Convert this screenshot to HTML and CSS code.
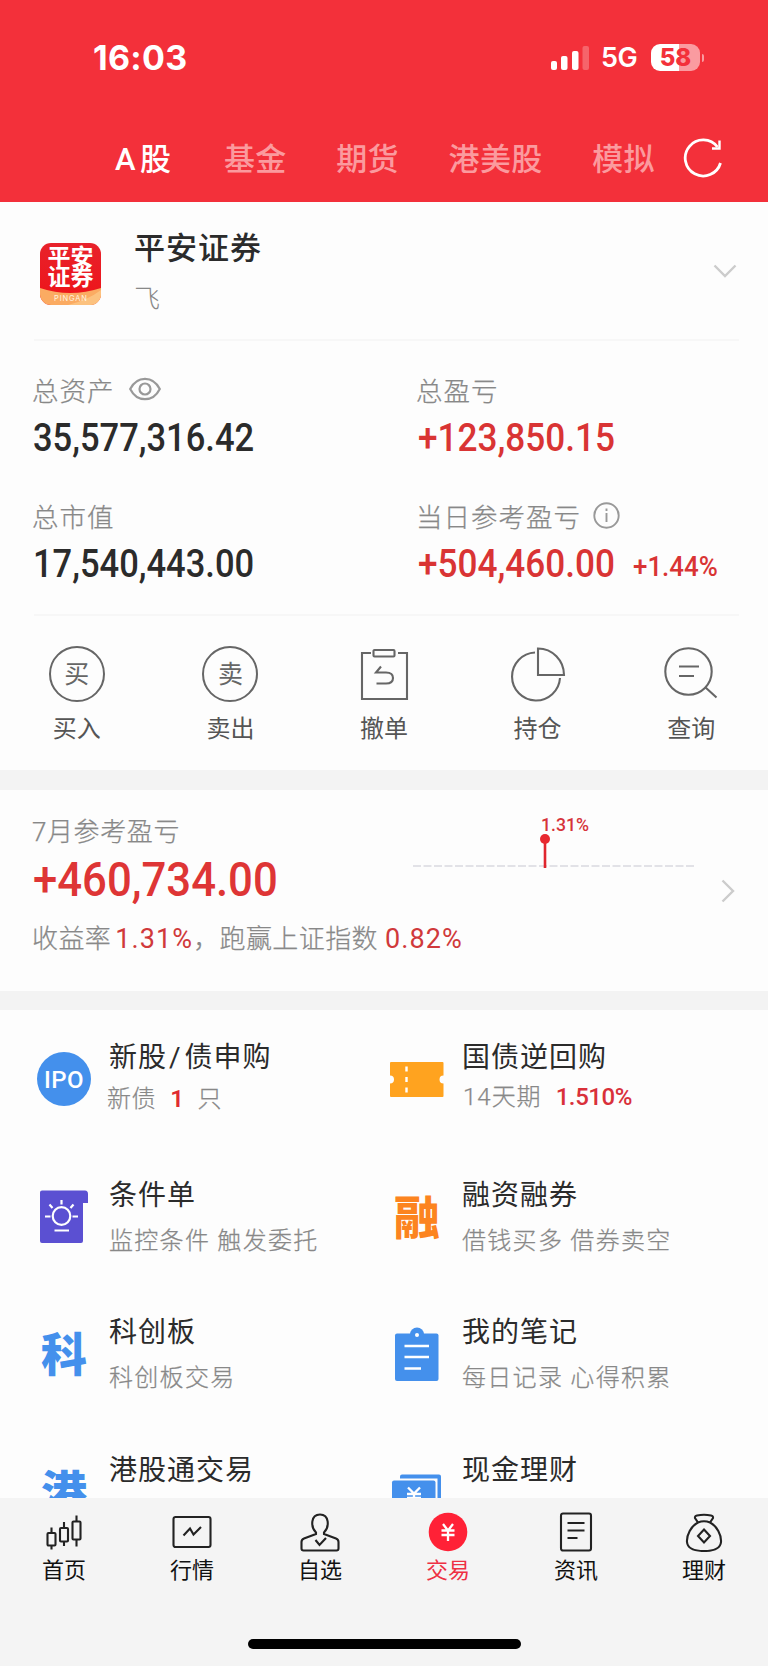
FILE: index.html
```html
<!DOCTYPE html>
<html lang="zh-CN">
<head>
<meta charset="UTF-8" />
<meta name="viewport" content="width=device-width, initial-scale=1" />
<title>平安证券 交易</title>
<link rel="stylesheet" href="styles.css">
</head>
<body>
<div class="app">
  <header class="header">
    <div class="status">
      <span class="time">16:03</span>
      <div class="status-right">
        <svg class="signal" width="38" height="24" viewBox="0 0 38 24" fill="#fff">
          <rect x="0" y="15" width="6" height="9" rx="2"/>
          <rect x="10" y="10" width="6.500" height="14" rx="2"/>
          <rect x="21" y="5" width="6.500" height="19" rx="2"/>
          <rect x="31.500" y="0" width="6.500" height="24" rx="2" opacity=".25"/>
        </svg>
        <span class="net">5G</span>
        <div class="battery">58</div>
        <i class="nub"></i>
      </div>
    </div>
    <nav class="tabs">
      <a class="tab active">A<b>股</b></a>
      <a class="tab">基金</a>
      <a class="tab">期货</a>
      <a class="tab">港美股</a>
      <a class="tab">模拟</a>
      <svg class="refresh" width="42" height="42" viewBox="0 0 42 42" fill="none" stroke="#fff" stroke-width="2.800">
        <path d="M38.500 26A18 18 0 1 1 35.500 10"/>
        <path d="M37.500 3.500V11.500H30" stroke-width="2.400"/>
      </svg>
    </nav>
  </header>

  <section class="account">
    <div class="logo">
      <span>平安</span>
      <span>证券</span>
      <svg width="61" height="17" viewBox="0 0 61 17">
        <path d="M0 0Q30 10 61 0V17H0Z" fill="#fbab62"/>
        <path d="M28 17Q48 12 61 2V17Z" fill="#fcc27f"/>
        <text x="14" y="13" textLength="33" font-family="Inter, sans-serif" font-size="7.500" fill="#fff3e0">PINGAN</text>
      </svg>
    </div>
    <div class="account-info">
      <h1>平安证券</h1>
      <p>飞</p>
    </div>
    <svg class="chevron-down" width="24" height="14" viewBox="0 0 24 14" fill="none" stroke="#ccc" stroke-width="2.400"><path d="M1.500 1.500L12 12L22.500 1.500"/></svg>
  </section>

  <section class="assets">
    <div class="asset">
      <div class="label">总资产
        <svg class="eye" width="32" height="24" viewBox="0 0 32 24" fill="none" stroke="#999" stroke-width="2.200"><path d="M1.200 12C8-1.600 24-1.600 30.800 12C24 25.600 8 25.600 1.200 12Z"/><circle cx="16" cy="12" r="5.500"/></svg>
      </div>
      <div class="value"><span class="num long">35,577,316.42</span></div>
    </div>
    <div class="asset">
      <div class="label">总盈亏</div>
      <div class="value red"><span class="num">+123,850.15</span></div>
    </div>
    <div class="asset">
      <div class="label">总市值</div>
      <div class="value"><span class="num long">17,540,443.00</span></div>
    </div>
    <div class="asset">
      <div class="label">当日参考盈亏
        <svg class="info" width="27" height="27" viewBox="0 0 27 27" fill="none" stroke="#999" stroke-width="1.900"><circle cx="13.500" cy="13.500" r="12.200"/><path d="M13.500 11V20M13.500 6.500V9"/></svg>
      </div>
      <div class="value red"><span class="num">+504,460.00</span><span class="num rate">+1.44%</span></div>
    </div>
  </section>

  <section class="actions">
    <a class="action">
      <span class="ring">买</span>
      买入
    </a>
    <a class="action">
      <span class="ring">卖</span>
      卖出
    </a>
    <a class="action">
      <svg width="56" height="56" viewBox="0 0 56 56" fill="none" stroke="#666" stroke-width="2.100">
        <path d="M15 7H6V53H51V7H42"/><rect x="17.500" y="4" width="21" height="6.500" rx="1"/>
        <path d="M25 20.500L20 26.500H30Q37 26.500 37 32Q37 37.500 30 37.500H20.500"/>
      </svg>
      撤单
    </a>
    <a class="action">
      <svg width="56" height="56" viewBox="0 0 56 56" fill="none" stroke="#666" stroke-width="2.100">
        <path d="M25 6.500A24 24 0 1 0 50 32"/><path d="M28 2.500V29H54A26 26.500 0 0 0 28 2.500Z"/>
      </svg>
      持仓
    </a>
    <a class="action">
      <svg width="56" height="56" viewBox="0 0 56 56" fill="none" stroke="#666" stroke-width="2.100">
        <circle cx="25.500" cy="25.500" r="23.200"/><path d="M42 41L53.500 51.500M16 20.500H36M16 30H31"/>
      </svg>
      查询
    </a>
  </section>

  <section class="month">
    <div class="month-info">
      <div class="label">7月参考盈亏</div>
      <div class="big"><span class="num">+460,734.00</span></div>
      <p class="compare">收益率<em>1.31%</em><span class="comma">，</span>跑赢上证指数<em class="last">0.82%</em></p>
    </div>
    <svg class="chart" width="284" height="64" viewBox="0 -4 284 64">
      <path d="M1 51H282" stroke="#d9d9e0" stroke-width="1.500" stroke-dasharray="8 2.500"/>
      <path d="M133 24V53" stroke="#e0262e" stroke-width="2.600"/>
      <circle cx="133" cy="24" r="5" fill="#e8282f"/>
      <text x="129" y="16" textLength="48" lengthAdjust="spacingAndGlyphs" font-family="Roboto, sans-serif" font-size="19" font-weight="500" fill="#d6333a">1.31%</text>
    </svg>
    <svg class="chevron-right" width="14" height="24" viewBox="0 0 14 24" fill="none" stroke="#ccc" stroke-width="2.400"><path d="M1.500 1.500L12 12L1.500 22.500"/></svg>
  </section>

  <section class="features">
    <div class="feature tight">
      <span class="icon ipo">IPO</span>
      <div><h2>新股<i class="slash">/</i>债申购</h2><p>新债<em class="one">1</em>只</p></div>
    </div>
    <div class="feature tight">
      <svg class="icon" viewBox="0 0 54 54">
        <path d="M1 10H52.500Q53.500 10 53.500 11V23.500A4 4 0 0 0 53.500 31.500V44Q53.500 45 52.500 45H1Q0 45 0 44V31.500A4 4 0 0 0 0 23.500V11Q0 10 1 10Z" fill="#ffa31f"/>
        <path d="M16.500 14.500V41" stroke="#fff" stroke-width="2.400" stroke-dasharray="5 5.500"/>
      </svg>
      <div><h2>国债逆回购</h2><p><span class="term">14天期</span><em class="yield">1.510%</em></p></div>
    </div>
    <div class="feature">
      <svg class="icon" viewBox="0 0 54 54">
        <path d="M5 0.500H48Q51 0.500 51 4V13H46V51Q46 53 44 53H5Q3 53 3 51V2.500Q3 0.500 5 0.500Z" fill="#5b50d2"/>
        <g fill="none" stroke="#fff" stroke-width="2.200"><circle cx="24.500" cy="26" r="8.800"/><path d="M24.500 10V14.500M12.500 14.500L15.500 18M36.500 14.500L33.500 18M8 26.500H13.500M35.500 26.500H41M17.500 40.500H32"/></g>
      </svg>
      <div><h2>条件单</h2><p>监控条件 触发委托</p></div>
    </div>
    <div class="feature">
      <span class="icon char orange">融</span>
      <div><h2>融资融券</h2><p>借钱买多 借券卖空</p></div>
    </div>
    <div class="feature">
      <span class="icon char">科</span>
      <div><h2>科创板</h2><p>科创板交易</p></div>
    </div>
    <div class="feature">
      <svg class="icon" viewBox="0 0 54 54">
        <rect x="5" y="6.500" width="43.500" height="47.500" rx="2" fill="#4490ec"/>
        <circle cx="27" cy="7.500" r="7" fill="#4490ec"/><circle cx="27" cy="8" r="2" fill="#fff"/>
        <path d="M14.500 19H39M14.500 30H39M14.500 41.500H31" stroke="#fff" stroke-width="2.400"/>
      </svg>
      <div><h2>我的笔记</h2><p>每日记录 心得积累</p></div>
    </div>
    <div class="feature">
      <span class="icon char">港</span>
      <div><h2>港股通交易</h2></div>
    </div>
    <div class="feature">
      <svg class="icon" viewBox="0 0 54 54">
        <path d="M12 9.500H49Q51 9.500 51 11.500V42H47.500V13.500H10V11.500Q10 9.500 12 9.500Z" fill="#4490ec"/>
        <rect x="2" y="15.500" width="43.500" height="30" rx="2" fill="#4490ec"/>
        <path d="M18 22.500L24 28.500L30 22.500M17 29H31M17 33H31M24 28V38" fill="none" stroke="#fff" stroke-width="2.300"/>
      </svg>
      <div><h2>现金理财</h2></div>
    </div>
  </section>

  <footer class="tabbar">
    <nav class="tabbar-items">
      <a class="item">
        <svg width="40" height="40" viewBox="0 0 40 40" fill="none" stroke="#222" stroke-width="2.100">
          <rect x="3.500" y="21" width="8" height="12.500" rx="1"/><rect x="16" y="16" width="8" height="13.500" rx="1"/><rect x="28.500" y="9.500" width="8" height="18" rx="1"/>
          <path d="M7.500 15.500V21M7.500 33.500V37.500M20 10V16M20 29.500V34M32.500 3.500V9.500M32.500 27.500V34.500"/>
        </svg>
        首页
      </a>
      <a class="item">
        <svg width="40" height="40" viewBox="0 0 40 40" fill="none" stroke="#222" stroke-width="2.100">
          <rect x="1.500" y="5" width="37" height="30" rx="2"/><path d="M11.500 23.500L18 16.500L21.500 22.500L29 15"/>
        </svg>
        行情
      </a>
      <a class="item">
        <svg width="40" height="40" viewBox="0 0 40 40" fill="none" stroke="#222" stroke-width="2.100">
          <path d="M16 20.500C10.500 15 10.500 2.500 20 2.500S29.500 15 24 20.500V22L36 26.500Q38.500 27.500 38.500 30V36.500Q38.500 38.500 36.500 38.500H3.500Q1.500 38.500 1.500 36.500V30Q1.500 27.500 4 26.500L16 22Z"/><path d="M15.500 28L19.500 33L26 26"/>
        </svg>
        自选
      </a>
      <a class="item on">
        <svg width="40" height="40" viewBox="0 0 40 40" fill="none" stroke="#fff" stroke-width="2.300">
          <circle cx="20" cy="20" r="19.300" fill="#ff2136" stroke="none"/><path d="M15 12L20 18.500L25 12M13.500 18.500H26.500M13.500 23H26.500M20 18.500V29"/>
        </svg>
        交易
      </a>
      <a class="item">
        <svg width="40" height="40" viewBox="0 0 40 40" fill="none" stroke="#222" stroke-width="2.100">
          <rect x="5" y="1.500" width="30" height="37" rx="2"/><path d="M11.500 11H28.500M11.500 18.500H28.500M11.500 26H21.500"/>
        </svg>
        资讯
      </a>
      <a class="item">
        <svg width="40" height="40" viewBox="0 0 40 40" fill="none" stroke="#222" stroke-width="2.100">
          <path d="M14 10.500L11 6Q10.500 4 13 3.500Q20 2 27 3.500Q29.500 4 29 6L26 10.500"/><path d="M14 10.500Q20 8 26 10.500C33 14 37.500 23 37 30C36.500 36 32 39 20 39S3.500 36 3 30C2.500 23 7 14 14 10.500Z"/><path d="M20 17.500L26 24L20 30.500L14 24Z"/>
        </svg>
        理财
      </a>
    </nav>
    <div class="home-bar"></div>
  </footer>
</div>
</body>
</html>
```
FILE: styles.css
```css
* {
  box-sizing: border-box;
  margin: 0;
  padding: 0;
}
body {
  background: #fdfdfd;
  font-family: Roboto, "Noto Sans CJK SC", sans-serif;
  color: #2b2b2b;
}
em, i { font-style: normal; }
.app {
  width: 768px;
  height: 1666px;
  display: flex;
  flex-direction: column;
  overflow: hidden;
}

/* 顶部 */
.header {
  height: 202px;
  flex: none;
  background: #f3303a;
  color: #fff;
}
.status {
  height: 114px;
  padding: 1px 64px 0 93px;
  display: flex;
  align-items: center;
  justify-content: space-between;
  font-family: Inter, sans-serif;
}
.time {
  font-size: 34px;
  font-weight: 700;
  letter-spacing: 0.3px;
}
.status-right {
  display: flex;
  align-items: center;
}
.net {
  margin-left: 12px;
  width: 50px;
  font-size: 27px;
  font-weight: 600;
  letter-spacing: -0.5px;
}
.battery {
  width: 49px;
  height: 27px;
  border-radius: 9px;
  background: linear-gradient(90deg, #fff 57%, #fa9ba0 57%);
  color: #f3303a;
  font-size: 24px;
  font-weight: 800;
  line-height: 27px;
  text-align: center;
}
.nub {
  width: 2px;
  height: 8px;
  margin-left: 2px;
  border-radius: 0 2px 2px 0;
  background: #fa9ba0;
}
.tabs {
  display: flex;
  align-items: center;
  padding-left: 115px;
  height: 88px;
}
.tab {
  margin-right: 49.5px;
  padding-top: 3px;
  font-size: 31px;
  font-weight: 500;
  line-height: 40px;
  letter-spacing: 0.4px;
  color: #fb9a9e;
}
.tab.active { color: #fff; margin-right: 52.5px; }
.tab b { font-weight: 500; margin-left: 4px; }
.tab:nth-child(5) { margin-right: 27px; }

/* 账户 */
.account {
  height: 139px;
  flex: none;
  display: flex;
  margin: 0 29px 0 34px;
  padding-left: 6px;
  border-bottom: 2px solid #f7f7f7;
}
.logo {
  width: 61px;
  height: 62px;
  margin-top: 41px;
  padding-top: 5px;
  border-radius: 11px;
  background: linear-gradient(#e8222b, #ee1218);
  overflow: hidden;
  display: flex;
  flex-direction: column;
  align-items: center;
}
.logo span {
  font-size: 23px;
  font-weight: 700;
  line-height: 20px;
  height: 20px;
  color: #fff;
}
.logo svg { flex: none; }
.account-info { margin-left: 33px; padding-top: 24px; }
.account-info h1 {
  font-size: 31px;
  font-weight: 500;
  line-height: 46px;
  letter-spacing: 1px;
}
.account-info p {
  margin-top: 8px;
  font-size: 26px;
  line-height: 38px;
  font-weight: 300;
  color: #888;
}
.chevron-down { margin: 62px 2px 0 auto; }

/* 资产 */
.assets {
  height: 275px;
  flex: none;
  display: grid;
  grid-template-columns: 384px 1fr;
  grid-template-rows: 126px 126px;
  margin: 0 29px 0 34px;
  padding-top: 29px;
  border-bottom: 2px solid #f7f7f7;
}
.label {
  display: flex;
  align-items: center;
  height: 38px;
  font-size: 26.5px;
  font-weight: 300;
  letter-spacing: 1px;
  color: #888;
  -webkit-text-stroke: 0.25px #888;
  margin-left: -2px;
}
.eye { margin-left: 14px; }
.info { margin-left: 12px; }
.value {
  display: flex;
  height: 58px;
  line-height: 60px;
  font-size: 38px;
  font-weight: 500;
}
.num {
  transform: scaleX(.925);
  transform-origin: left;
  white-space: nowrap;
}
.num.long { transform: scaleX(.908); margin-left: -1px; }
.red { color: #d93434; }
.num.rate {
  margin-left: 2px;
  padding-top: 3px;
  font-size: 28px;
  font-weight: 500;
}

/* 买卖 */
.actions {
  height: 154px;
  flex: none;
  display: grid;
  grid-template-columns: repeat(5, 1fr);
  padding-top: 30px;
}
.action {
  display: flex;
  flex-direction: column;
  align-items: center;
  font-size: 24px;
  line-height: 34px;
  color: #555;
}
.action svg, .ring { margin-bottom: 10px; }
.ring {
  width: 56px;
  height: 56px;
  border: 2px solid #666;
  border-radius: 50%;
  font-size: 25px;
  line-height: 53px;
  text-align: center;
  color: #666;
}

/* 当月盈亏 */
.month {
  height: 240px;
  flex: none;
  display: flex;
  padding-left: 34px;
  border-top: 20px solid #f3f3f3;
  border-bottom: 19px solid #f3f3f3;
}
.month-info { width: 378px; padding-top: 20px; }
.month-info .label { font-size: 26px; letter-spacing: 0.6px; }
.big {
  height: 70px;
  margin: -3px 0 0 -1px;
  line-height: 70px;
  font-size: 48px;
  font-weight: 500;
  color: #de3535;
}
.big .num { display: inline-block; transform: scaleX(.91); }
.compare {
  margin: 4px 0 0 -2px;
  font-size: 26px;
  line-height: 40px;
  font-weight: 300;
  letter-spacing: 0.4px;
  color: #888;
  -webkit-text-stroke: 0.25px #888;
  white-space: nowrap;
}
.compare em {
  font-weight: 400;
  font-size: 27px;
  letter-spacing: 1.1px;
  color: #d0393b;
  -webkit-text-stroke: 0;
  margin-left: 4px;
}
.compare .last { margin-left: 7px; }
.chart { flex: none; margin-top: 21px; }
.chevron-right { margin: 89px 0 0 25px; }

/* 功能列表 */
.features {
  flex: 1;
  min-height: 0;
  overflow: hidden;
  display: grid;
  grid-template-columns: 353px 1fr;
  grid-auto-rows: 137.7px;
  padding: 26px 0 0 37px;
}
.feature { display: flex; }
.icon {
  width: 54px;
  height: 54px;
  flex: none;
  margin: 16px 18px 0 0;
}
.ipo {
  border-radius: 50%;
  background: #4490ec;
  color: #fff;
  font-size: 24px;
  font-weight: 500;
  letter-spacing: 0.5px;
  line-height: 56px;
  text-align: center;
}
.char {
  font-size: 46px;
  font-weight: 900;
  line-height: 57px;
  text-align: center;
  color: #4490ec;
}
.orange { color: #fc8420; }
.feature h2 {
  padding-top: 2px;
  font-size: 28px;
  font-weight: 400;
  line-height: 40px;
  letter-spacing: 1px;
  white-space: nowrap;
}
.slash { margin: 0 3px 0 2px; }
.feature p {
  margin-top: 8px;
  font-size: 24px;
  line-height: 34px;
  font-weight: 300;
  letter-spacing: 1.3px;
  color: #888;
  -webkit-text-stroke: 0.25px #888;
  white-space: nowrap;
}
.feature p em { -webkit-text-stroke: 0; }
.tight p { margin: 4px 0 0 -2px; letter-spacing: 0.6px; }
.one { margin: 0 13px 0 14px; font-weight: 600; color: #e02b30; }
.term { margin-left: 3px; }
.tight:nth-child(2) p { margin-top: 2px; letter-spacing: 1px; }
.feature .yield { margin-left: 14px; font-weight: 500; letter-spacing: -0.4px; color: #d9303a; }

/* 底部导航 */
.tabbar {
  height: 168px;
  flex: none;
  padding-top: 14px;
  background: #f4f4f4;
}
.tabbar-items { display: grid; grid-template-columns: repeat(6, 1fr); height: 127px; }
.item {
  display: flex;
  flex-direction: column;
  align-items: center;
  font-size: 22px;
  line-height: 32px;
  color: #111;
}
.item svg { margin-bottom: 3px; }
.item.on { color: #ee3043; }
.home-bar {
  width: 273px;
  height: 10px;
  margin: 0 auto;
  border-radius: 5px;
  background: #000;
}
```
